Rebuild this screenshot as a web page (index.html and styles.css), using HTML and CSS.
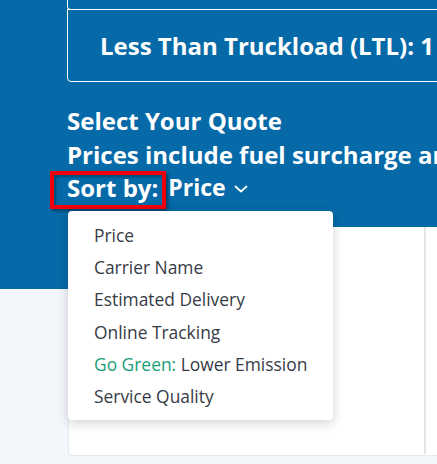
FILE: index.html
```html
<!DOCTYPE html>
<html lang="en">
  <head>
    <meta charset="UTF-8" />
    <meta name="viewport" content="width=device-width, initial-scale=1.0" />
    <title>Select Your Quote</title>
    <link rel="stylesheet" href="styles.css">
  </head>
  <body>
    <div class="hero">
      <div class="mode-box mode-prev"></div>
      <div class="mode-box mode-ltl">
        <span>Less Than Truckload (LTL): 1 Quote</span>
      </div>

      <h2 class="quote-title">Select Your Quote</h2>
      <p class="quote-note">Prices include fuel surcharge and accessorials</p>

      <div class="sort-row">
        <span class="sort-label">Sort by:</span>
        <span class="highlight"></span>
        <button class="sort-value">
          Price
          <svg width="14" height="8" viewBox="0 0 14 8">
            <path d="M1.5 1.5 L7 6.5 L12.5 1.5" fill="none" stroke="#fff" stroke-width="1.8" stroke-linecap="round" stroke-linejoin="round" />
          </svg>
        </button>

        <ul class="sort-menu">
          <li>Price</li>
          <li>Carrier Name</li>
          <li>Estimated Delivery</li>
          <li>Online Tracking</li>
          <li><span class="green">Go Green:</span> Lower Emission</li>
          <li>Service Quality</li>
        </ul>
      </div>
    </div>

    <div class="results">
      <div class="result-card">
        <div class="result-main"></div>
      </div>
    </div>
  </body>
</html>
```

FILE: styles.css
```css
body {
  font-family: "Open Sans", "Liberation Sans", sans-serif;
  margin: 0;
  padding: 0;
  background-color: #f3f7fc;
  overflow: hidden;
}

.hero {
  background-color: #066aa8;
  color: #fff;
  padding: 0 0 62px 67px;
  height: 227px;
}

.mode-box {
  width: 520px;
  border: 1px solid #fff;
  border-radius: 4px;
  box-sizing: border-box;
}

.mode-prev {
  height: 10px;
  border-top: none;
  border-radius: 0 0 4px 4px;
}

.mode-ltl {
  height: 73px;
  margin-top: -1px;
  border-radius: 0 0 4px 4px;
  display: flex;
  align-items: center;
  padding-left: 32px;
  font-size: 24px;
  font-weight: 700;
  white-space: nowrap;
}

.quote-title,
.quote-note {
  margin: 0;
  font-size: 24px;
  font-weight: 700;
  line-height: 34px;
  white-space: nowrap;
}

.quote-title {
  margin-top: 22px;
}

.quote-note {
  line-height: 33px;
}

.sort-row {
  position: relative;
  display: flex;
  align-items: center;
  font-size: 24px;
  font-weight: 700;
  line-height: 33px;
}

.sort-label {
  margin-right: 10px;
}

.highlight {
  position: absolute;
  left: -17px;
  top: 0;
  width: 116px;
  height: 38px;
  box-sizing: border-box;
  border: 4px solid #f0000c;
  box-shadow: 2px 2px 3px rgba(0, 0, 0, 0.45), inset 2px 2px 3px rgba(0, 0, 0, 0.35);
}

.sort-value {
  display: flex;
  align-items: center;
  gap: 8px;
  background: none;
  border: none;
  color: #fff;
  font: inherit;
  font-size: 23px;
  padding: 0;
  cursor: pointer;
}

.sort-value svg {
  margin-top: 3px;
}

.sort-menu {
  position: absolute;
  left: 1px;
  top: 40px;
  width: 265px;
  margin: 0;
  padding: 8px 0 8px 0;
  list-style: none;
  background-color: #fff;
  border-radius: 4px;
  box-shadow: 0 3px 12px rgba(0, 0, 0, 0.18);
  z-index: 2;
}

.sort-menu li {
  padding-left: 26px;
  font-size: 17.4px;
  font-weight: 400;
  line-height: 32.2px;
  color: #363b46;
  white-space: nowrap;
}

.green {
  color: #17a077;
}

.results {
  padding-left: 68px;
  margin-top: -62px;
}

.result-card {
  height: 228px;
  background-color: #fff;
  border: 1px solid #e6eaf0;
  border-top: none;
  border-right: none;
  border-radius: 0 0 0 4px;
  display: flex;
}

.result-main {
  width: 355px;
  border-right: 2px solid #e4e4e4;
  margin-bottom: 1px;
}
```
